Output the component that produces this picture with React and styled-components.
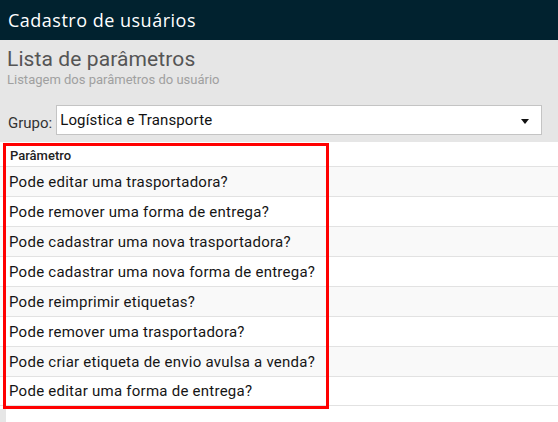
import React from "react";
import styled, { createGlobalStyle } from "styled-components";

const GlobalStyle = createGlobalStyle`
  html, body {
    margin: 0;
    padding: 0;
    background: #ffffff;
    font-family: Roboto, "Liberation Sans", sans-serif;
  }
`;

const TopBar = styled.header`
  height: 40px;
  background: #01222f;
  display: flex;
  align-items: center;
  padding-left: 8px;
  color: #ffffff;
  font-family: "Open Sans", sans-serif;
  font-size: 18px;
  letter-spacing: 0.5px;
`;

const Intro = styled.section`
  background: #e6e6e6;
  padding: 6px 16px 6px 7px;
  height: 90px;
`;

const Title = styled.h1`
  margin: 0;
  font-size: 21px;
  font-weight: 400;
  color: #555555;
  line-height: 26px;
  letter-spacing: 0.1px;
`;

const Subtitle = styled.div`
  font-size: 13px;
  color: #a0a0a0;
  line-height: 14px;
  margin-top: 1px;
`;

const GroupRow = styled.div`
  display: flex;
  align-items: center;
  margin-top: 18px;
  padding-left: 1px;
`;

const Label = styled.label`
  font-size: 15px;
  color: #333333;
  margin-right: 4px;
  padding-top: 6px;
`;

const Select = styled.div`
  flex: 1;
  height: 28px;
  background: #ffffff;
  border: 1px solid #c4c4c4;
  display: flex;
  align-items: center;
  justify-content: space-between;
  padding: 0 12px 0 3px;
  font-size: 15px;
  letter-spacing: 0.15px;
  color: #111111;
`;

const Arrow = styled.span`
  width: 0;
  height: 0;
  border-left: 4px solid transparent;
  border-right: 4px solid transparent;
  border-top: 5px solid #111111;
  margin-top: 2px;
`;

const TableWrap = styled.div`
  position: relative;
`;

const HeadRow = styled.div`
  height: 24px;
  display: flex;
  align-items: flex-end;
  padding: 0 10px 3px;
  box-sizing: border-box;
  font-size: 13px;
  font-weight: 500;
  color: #222222;
`;

const Row = styled.div`
  height: 30px;
  box-sizing: border-box;
  border-top: 1px solid #e2e2e2;
  background: ${(p) => (p.$odd ? "#f9f9f9" : "#ffffff")};
  display: flex;
  align-items: center;
  padding: 0 9px;
  font-size: 15px;
  letter-spacing: 0.25px;
  color: #151515;
  &:last-child {
    border-bottom: 1px solid #e2e2e2;
  }
`;

const Footer = styled.div`
  height: 15px;
  margin-top: 3px;
  border-left: 6px solid #e6e6e6;
`;

const Highlight = styled.div`
  position: absolute;
  box-sizing: border-box;
  left: 3px;
  top: 1px;
  width: 326px;
  height: 266px;
  border: 3px solid #ff0000;
  pointer-events: none;
`;

const params = [
  "Pode editar uma trasportadora?",
  "Pode remover uma forma de entrega?",
  "Pode cadastrar uma nova trasportadora?",
  "Pode cadastrar uma nova forma de entrega?",
  "Pode reimprimir etiquetas?",
  "Pode remover uma trasportadora?",
  "Pode criar etiqueta de envio avulsa a venda?",
  "Pode editar uma forma de entrega?",
];

export default function App() {
  return (
    <>
      <GlobalStyle />
      <TopBar>Cadastro de usuários</TopBar>
      <Intro>
        <Title>Lista de parâmetros</Title>
        <Subtitle>Listagem dos parâmetros do usuário</Subtitle>
        <GroupRow>
          <Label>Grupo:</Label>
          <Select>
            <span>Logística e Transporte</span>
            <Arrow />
          </Select>
        </GroupRow>
      </Intro>
      <TableWrap>
        <HeadRow>Parâmetro</HeadRow>
        <div>
          {params.map((p, i) => (
            <Row key={p} $odd={i % 2 === 0}>
              {p}
            </Row>
          ))}
        </div>
        <Footer />
        <Highlight />
      </TableWrap>
    </>
  );
}
